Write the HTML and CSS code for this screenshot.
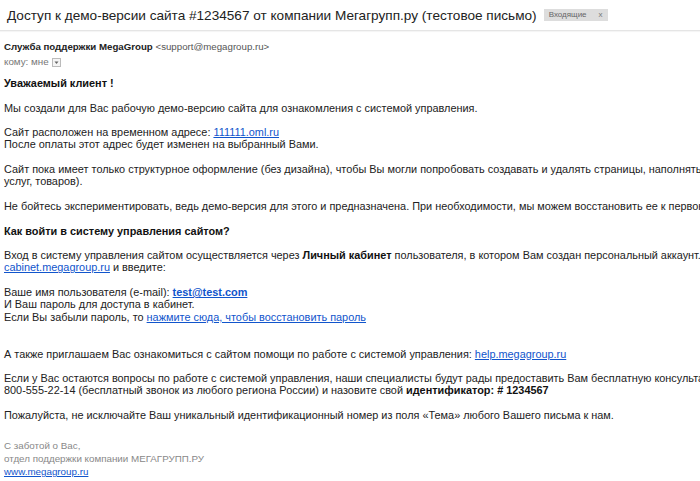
FILE: index.html
```html
<!DOCTYPE html>
<html lang="ru">
<head>
<meta charset="utf-8">
<title>Доступ к демо-версии сайта</title>
<link rel="stylesheet" href="styles.css">
</head>
<body>
<div class="subject-bar">
  <h1 class="subject">Доступ к демо-версии сайта #1234567 от компании Мегагрупп.ру (тестовое письмо)</h1>
  <span class="label">Входящие<span class="label-x">x</span></span>
</div>
<div class="message">
  <div class="from"><b class="sender">Служба поддержки MegaGroup</b> <span class="addr">&lt;support@megagroup.ru&gt;</span></div>
  <div class="to">кому: мне <span class="dd"><svg width="9" height="9" viewBox="0 0 9 9"><rect x="0.5" y="0.5" width="8" height="8" fill="#f5f5f5" stroke="#bbb"/><path d="M2.5 3.5h4l-2 2.5z" fill="#666"/></svg></span></div>
  <div class="body">
    <p class="strong">Уважаемый клиент !</p>
    <p>Мы создали для Вас рабочую демо-версию сайта для ознакомления с системой управления.</p>
    <p>Сайт расположен на временном адресе: <a href="#">111111.oml.ru</a><br>После оплаты этот адрес будет изменен на выбранный Вами.</p>
    <p>Сайт пока имеет только структурное оформление (без дизайна), чтобы Вы могли попробовать создавать и удалять страницы, наполнять их информацией (описанием компании,<br>услуг, товаров).</p>
    <p>Не бойтесь экспериментировать, ведь демо-версия для этого и предназначена. При необходимости, мы можем восстановить ее к первоначальному виду.</p>
    <p class="strong">Как войти в систему управления сайтом?</p>
    <p>Вход в систему управления сайтом осуществляется через <b>Личный кабинет</b> пользователя, в котором Вам создан персональный аккаунт. Перейдите по ссылке<br><a href="#">cabinet.megagroup.ru</a> и введите:</p>
    <p>Ваше имя пользователя (e-mail): <a href="#" class="bold-link">test@test.com</a><br>И Ваш пароль для доступа в кабинет.<br>Если Вы забыли пароль, то <a href="#">нажмите сюда, чтобы восстановить пароль</a></p>
    <p class="gap">А также приглашаем Вас ознакомиться с сайтом помощи по работе с системой управления: <a href="#">help.megagroup.ru</a></p>
    <p>Если у Вас остаются вопросы по работе с системой управления, наши специалисты будут рады предоставить Вам бесплатную консультацию по телефону<br>800-555-22-14 (бесплатный звонок из любого региона России) и назовите свой <b>идентификатор: # 1234567</b></p>
    <p>Пожалуйста, не исключайте Ваш уникальный идентификационный номер из поля «Тема» любого Вашего письма к нам.</p>
    <p class="sign">С заботой о Вас,<br>отдел поддержки компании МЕГАГРУПП.РУ<br><a href="#">www.megagroup.ru</a><br>E-mail службы поддержки: <a href="#">support@megagroup.ru</a></p>
  </div>
</div>
</body>
</html>
```

FILE: styles.css
```css
html, body {
  margin: 0;
  padding: 0;
  background: #fff;
  overflow: hidden;
}
body {
  font-family: "Liberation Sans", Arial, sans-serif;
  color: #222;
  width: 700px;
  height: 481px;
}
.subject-bar {
  display: flex;
  align-items: center;
  height: 30px;
  padding-left: 7px;
  border-bottom: 1px solid #e5e5e5;
  box-shadow: 0 1px 1px rgba(0,0,0,0.04);
  white-space: nowrap;
  overflow: hidden;
}
.subject {
  margin: 0;
  font-size: 13.6px;
  font-weight: normal;
  color: #222;
}
.label {
  margin-left: 7px;
  background: #ddd;
  color: #666;
  font-size: 8px;
  line-height: 12px;
  padding: 0 5px 0 5px;
  display: inline-flex;
  gap: 12px;
}
.label-x { color: #777; }
.message {
  padding: 9px 4px 0 4px;
  white-space: nowrap;
  overflow: hidden;
}
.from {
  font-size: 9.7px;
  line-height: 14px;
}
.sender { color: #222; }
.addr { color: #555; font-size: 9.7px; }
.to {
  font-size: 9.8px;
  color: #777;
  line-height: 16px;
  display: flex;
  align-items: center;
  gap: 3px;
}
.dd { display: inline-flex; }
.body {
  font-size: 10.9px;
  line-height: 12.3px;
  padding-top: 7px;
}
.body p { margin: 0 0 12.3px 0; }
.strong { font-weight: bold; color: #111; }
.body b { color: #111; }
a { color: #15c; text-decoration: underline; }
.bold-link { font-weight: bold; }
.gap { margin-top: 24.6px !important; }
.sign {
  color: #888;
  font-size: 9.8px;
  line-height: 12.8px;
  margin-top: 19px !important;
}
```
